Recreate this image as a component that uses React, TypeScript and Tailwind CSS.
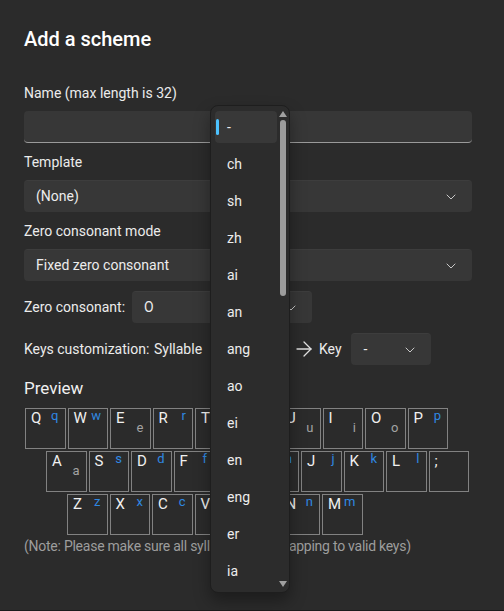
import { ArrowRight } from "lucide-react";

const font = { fontFamily: 'Roboto, "Noto Sans", sans-serif' };

type KeyDef = [string, string, "b" | "g" | ""];

const row1: KeyDef[] = [
  ["Q", "q", "b"], ["W", "w", "b"], ["E", "e", "g"], ["R", "r", "b"], ["T", "t", "b"],
  ["Y", "y", "b"], ["U", "u", "g"], ["I", "i", "g"], ["O", "o", "g"], ["P", "p", "b"],
];
const row2: KeyDef[] = [
  ["A", "a", "g"], ["S", "s", "b"], ["D", "d", "b"], ["F", "f", "b"], ["G", "g", "b"],
  ["H", "h", "b"], ["J", "j", "b"], ["K", "k", "b"], ["L", "l", "b"], [";", "", ""],
];
const row3: KeyDef[] = [
  ["Z", "z", "b"], ["X", "x", "b"], ["C", "c", "b"], ["V", "v", "b"], ["B", "b", "b"],
  ["N", "n", "b"], ["M", "m", "b"],
];

const options = ["-", "ch", "sh", "zh", "ai", "an", "ang", "ao", "ei", "en", "eng", "er", "ia"];

function Chevron() {
  return (
    <svg width="10" height="6" viewBox="0 0 10 6" fill="none">
      <path d="M1 1L5 5L9 1" stroke="#c8c8c8" strokeWidth="1" strokeLinecap="round" strokeLinejoin="round" />
    </svg>
  );
}

function Combo({ text, className }: { text: string; className: string }) {
  return (
    <div className={`h-8 rounded-[4px] bg-[#373737] border-t border-[#3d3d3d] flex items-center justify-between pl-3 pr-4 ${className}`}>
      <span className="text-[14px] text-[#ececec]">{text}</span>
      <Chevron />
    </div>
  );
}

function Key({ k }: { k: KeyDef }) {
  const [upper, lower, kind] = k;
  return (
    <div className="relative w-[40.5px] h-[41px] border border-[#828282] shrink-0">
      <span className="absolute left-[5px] top-[-1px] text-[15px] leading-[20px] text-[#f0f0f0]">{upper}</span>
      {kind === "b" && (
        <span className="absolute right-[6px] top-[-1px] text-[13px] leading-[16px] text-[#2f88e2]">{lower}</span>
      )}
      {kind === "g" && (
        <span className="absolute right-[6px] top-[11px] text-[13px] leading-[16px] text-[#a3a3a3]">{lower}</span>
      )}
    </div>
  );
}

export default function App() {
  return (
    <div style={font} className="relative w-[504px] h-[611px] bg-[#2b2b2b] overflow-hidden text-[#ececec]">
      <div className="flex flex-col pl-6 pr-8 pt-[25px]">
        <h1 className="text-[20px] leading-[28px] font-medium text-white">Add a scheme</h1>

        <label className="mt-[30px] text-[14px] leading-[20px]">Name (max length is 32)</label>
        <div className="mt-2 h-8 rounded-[4px] bg-[#373737] border-b border-[#9a9a9a]" />

        <label className="mt-[9px] text-[14px] leading-[20px]">Template</label>
        <Combo text="(None)" className="mt-2" />

        <label className="mt-[9px] text-[14px] leading-[20px]">Zero consonant mode</label>
        <Combo text="Fixed zero consonant" className="mt-2" />

        <div className="mt-[10px] flex items-center">
          <span className="w-[108px] text-[14px] whitespace-nowrap">Zero consonant:</span>
          <Combo text="O" className="w-[180px]" />
        </div>

        <div className="mt-[10px] flex items-center">
          <span className="w-[130px] text-[14px] whitespace-nowrap">Keys customization:</span>
          <span className="w-[56px] text-[14px]">Syllable</span>
          <Combo text="-" className="w-[80px]" />
          <ArrowRight size={24} strokeWidth={1.3} className="ml-[2px] text-[#e0e0e0]" />
          <span className="ml-[3px] text-[14px]">Key</span>
          <Combo text="-" className="ml-[9px] w-[80px] pl-[13px] pr-[16px]" />
        </div>

        <h2 className="mt-[11px] text-[17px] leading-[24px] text-[#f0f0f0]">Preview</h2>

        <div className="mt-2 flex flex-col gap-[2px]">
          <div className="flex gap-[2px] ml-[1px]">
            {row1.map((k) => <Key key={k[0]} k={k} />)}
          </div>
          <div className="flex gap-[2px] ml-[22px]">
            {row2.map((k) => <Key key={k[0]} k={k} />)}
          </div>
          <div className="flex gap-[2px] ml-[43px]">
            {row3.map((k) => <Key key={k[0]} k={k} />)}
          </div>
        </div>

        <p className="mt-[1px] text-[14px] leading-[20px] tracking-[-0.25px] text-[#9d9d9d]">
          (Note: Please make sure all syllables have mapping to valid keys)
        </p>
      </div>

      <div className="absolute bottom-0 left-0 right-0 h-px bg-[#1c1c1c]" />

      {/* dropdown open over the syllable combo */}
      <div className="absolute left-[210px] top-[105px] w-[80px] h-[488px] rounded-[8px] bg-[#2c2c2c] border border-[#1e1e1e] shadow-[0_8px_16px_rgba(0,0,0,0.35)] flex">
        <div className="flex flex-col gap-[5px] pl-[4px] pt-[5px] w-[66px]">
          {options.map((o, i) => (
            <div key={o} className={`relative h-8 rounded-[4px] flex items-center pl-3 text-[14px] text-[#ececec] ${i === 0 ? "bg-[#383838]" : ""}`}>
              {i === 0 && <span className="absolute left-[1px] top-[8px] w-[3px] h-4 rounded-full bg-[#4cc2ff]" />}
              {o}
            </div>
          ))}
        </div>
        <div className="flex-1 flex flex-col items-center pt-[5px] pb-[5px]">
          <svg width="8" height="6" viewBox="0 0 8 6"><path d="M4 0L8 6H0Z" fill="#a0a0a0" /></svg>
          <div className="mt-[3px] w-[6px] h-[176px] rounded-full bg-[#9c9c9c]" />
          <div className="flex-1" />
          <svg width="8" height="6" viewBox="0 0 8 6"><path d="M0 0H8L4 6Z" fill="#a0a0a0" /></svg>
        </div>
      </div>
    </div>
  );
}
